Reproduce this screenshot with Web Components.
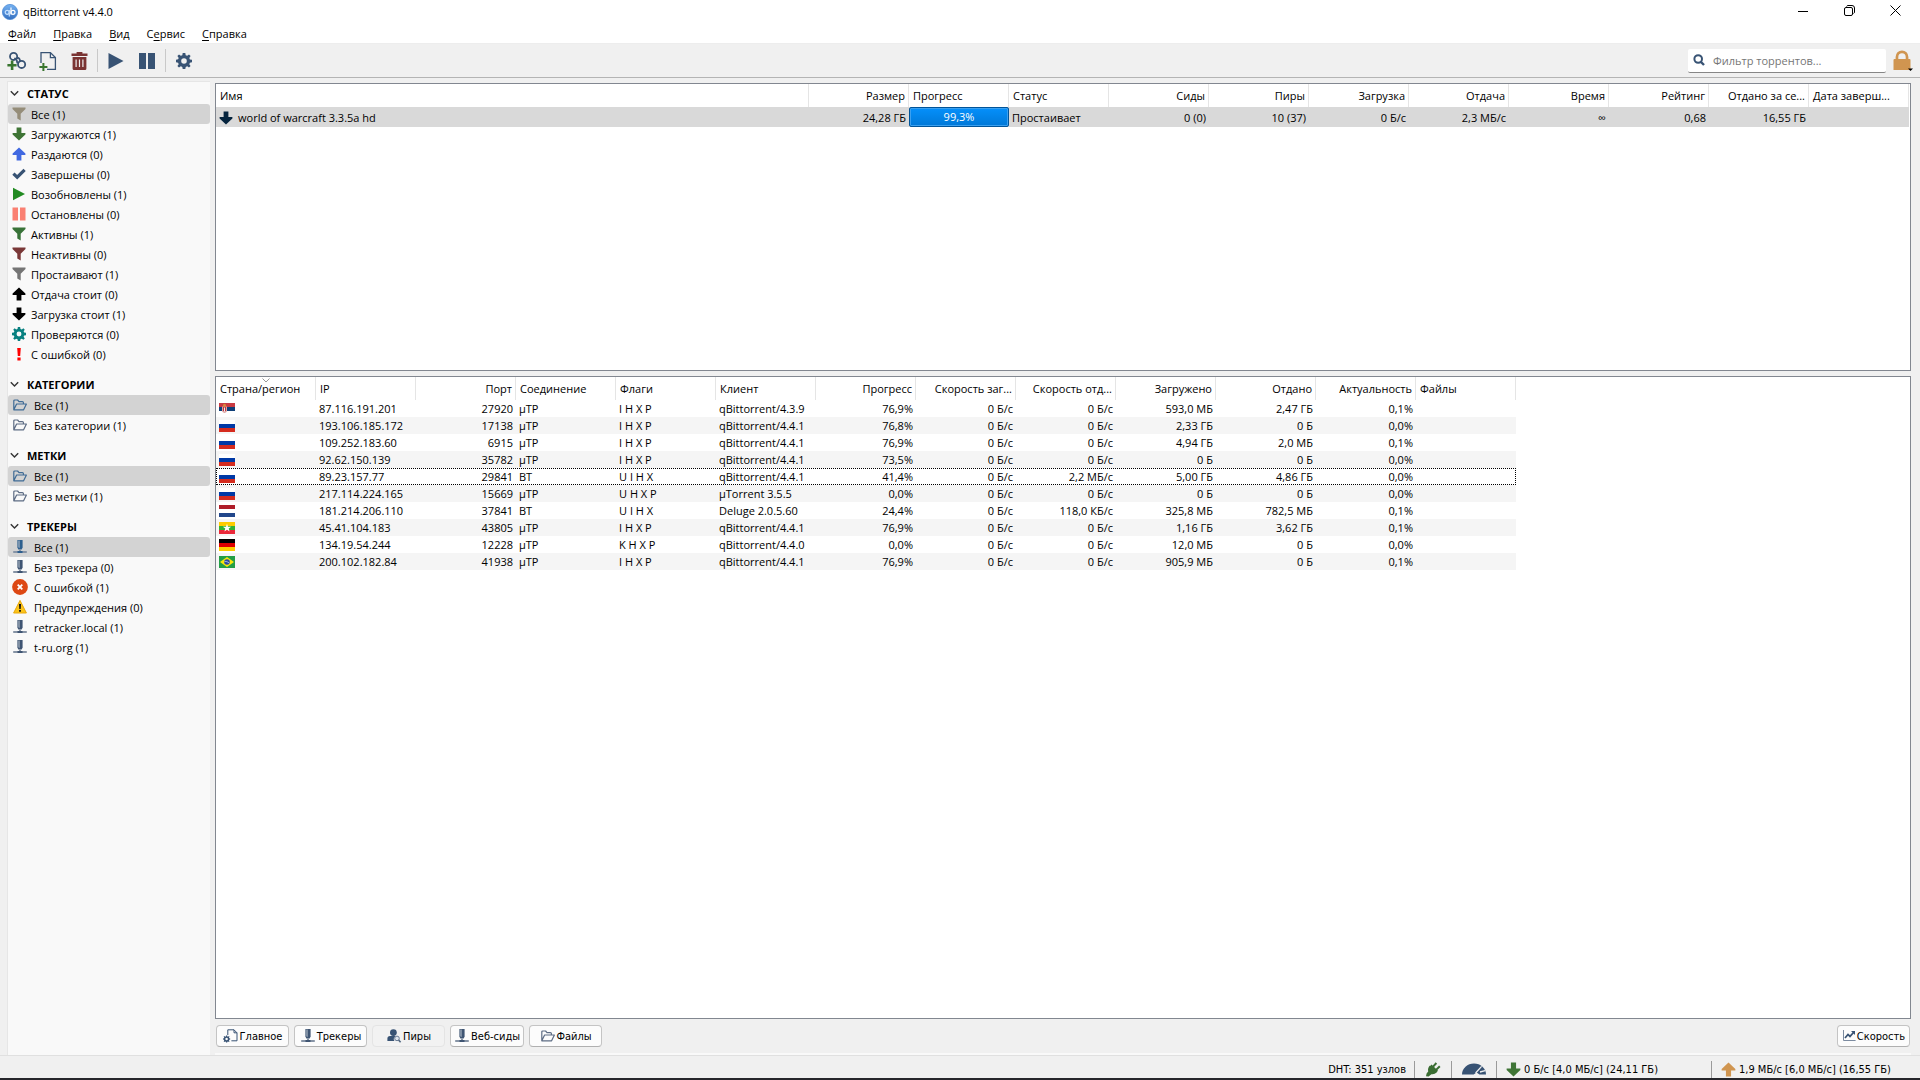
<!DOCTYPE html>
<html lang="ru">
<head>
<meta charset="utf-8">
<title>qBittorrent v4.4.0</title>
<style>
html,body{margin:0;height:100%}
body{font:11px/20px "Open Sans","Noto Sans",sans-serif;color:#000;background:#f0f0f0;overflow:hidden}
qb-window{height:100vh}
</style>
</head>
<body>
<qb-window></qb-window>
<script>
const BLUE = '#385374';
const svg = (w, h, vb, body) => `<svg width="${w}" height="${h}" viewBox="${vb}" aria-hidden="true">${body}</svg>`;
const gearPath = 'M8 5.2A2.8 2.8 0 1 0 8 10.8A2.8 2.8 0 1 0 8 5.2ZM6.7 0H9.3L9.7 2.2L11.2 2.8L13 1.5L14.6 3.1L13.3 4.9L13.9 6.4L16 6.7V9.3L13.9 9.7L13.3 11.2L14.6 13L13 14.6L11.2 13.3L9.7 13.9L9.3 16H6.7L6.3 13.9L4.8 13.3L3 14.6L1.4 13L2.7 11.2L2.1 9.7L0 9.3V6.7L2.1 6.3L2.7 4.9L1.4 3.1L3 1.5L4.8 2.8L6.3 2.2Z';
const gear = (s, c) => svg(s, s, '0 0 16 16', `<path fill-rule="evenodd" fill="${c}" d="${gearPath}"/>`);
const funnel = c => svg(14, 14, '0 0 14 14', `<path fill="${c}" d="M.5.5H13.5V2L8.7 6.8V13.5L5.3 11.5V6.8L.5 2Z"/>`);
const down = (c, s = 14) => svg(s, s, '0 0 14 14', `<path fill="${c}" d="M4.6.5H9.4V6H13.4V7.4L7 13.6L.6 7.4V6H4.6Z"/>`);
const up = (c, s = 14) => svg(s, s, '0 0 14 14', `<path fill="${c}" d="M4.6 13.5H9.4V8H13.4V6.6L7 .4L.6 6.6V8H4.6Z"/>`);
const folder = c => svg(16, 14, '0 0 16 14', `<path fill="none" stroke="${c}" stroke-width="1.2" stroke-linejoin="round" d="M1.8 11.5V3Q1.8 2 2.8 2H5.6L7 3.6H10.4Q11.4 3.6 11.4 4.6V5.6M1.8 11.8L4.6 6H14.4L11.6 11.8Z"/>`);
const tracker = c => svg(16, 16, '0 0 16 16', `<path fill="${c}" d="M5.4 1H10.6V8.6L9.6 10.6H6.4L5.4 8.6Z"/><path fill="#aab6c4" d="M6.4 1.6H7.6V9.2L7 8.4H6.4Z"/><path fill="#8794a6" d="M1.2 12H14.8V14H1.2ZM7 10.6H9V12H7Z"/><path fill="${c}" d="M5.5 12H10.5V14H5.5Z"/>`);
const ICONS = {
  logo: svg(16, 16, '0 0 16 16', '<defs><linearGradient id="g" x2="0" y2="1"><stop stop-color="#76b3f3"/><stop offset="1" stop-color="#346fbf"/></linearGradient></defs><circle cx="8" cy="8" r="7.6" fill="url(#g)" stroke="#4b8ad6" stroke-width=".8"/><g fill="none" stroke="#c4e0ff" stroke-width="1.2"><circle cx="5.2" cy="8.3" r="2"/><path d="M7.3 6V12.6"/></g><g fill="none" stroke="#fff" stroke-width="1.2"><circle cx="11" cy="8.3" r="2"/><path d="M9 3.6V10.5"/></g>'),
  link: svg(20, 20, '0 0 20 20', `<g fill="none" stroke="${BLUE}" stroke-width="1.8"><circle cx="6.6" cy="5.4" r="3.6"/><circle cx="14.6" cy="13.4" r="3.6"/><path d="M7.2 7.4Q8.6 8 10 7.2Q12 6.4 12.6 8.2Q13 9.6 13.4 11M9.6 8.6L10.4 12.4"/></g><path fill="#39752f" d="M3.8 9.6H6.4V13H9.6V15.6H6.4V19H3.8V15.6H.4V13H3.8Z"/>`),
  file: svg(18, 20, '0 0 18 20', `<path fill="none" stroke="${BLUE}" stroke-width="1.3" d="M2 12V1.6H11.4L16.4 6.6V18.4H8M11.4 1.6V6.6H16.4"/><path fill="#39752f" d="M3.4 12H5.4V15H8.4V17H5.4V20H3.4V17H.4V15H3.4Z"/>`),
  trash: svg(17, 20, '0 0 17 20', '<path fill="#7a3332" fill-rule="evenodd" d="M5.6 1H11.4V2.6H16.5V5H.5V2.6H5.6ZM1.6 6H15.4V17.5Q15.4 19 14 19H3Q1.6 19 1.6 17.5ZM4.5 8.5V16H5.7V8.5ZM7.9 8.5V16H9.1V8.5ZM11.3 8.5V16H12.5V8.5Z"/>'),
  start: svg(16, 18, '0 0 16 18', `<path fill="${BLUE}" d="M.5 1L15.5 9L.5 17Z"/>`),
  pause: svg(18, 18, '0 0 18 18', `<path fill="${BLUE}" d="M1 1H8V17H1ZM10 1H17V17H10Z"/>`),
  options: gear(16, BLUE),
  search: svg(12, 12, '0 0 12 12', `<circle cx="5.2" cy="5" r="3.8" fill="none" stroke="${BLUE}" stroke-width="2"/><path d="M8 8L11 11" stroke="${BLUE}" stroke-width="2.4"/>`),
  lock: svg(20, 24, '0 0 20 24', '<path fill="#d09550" fill-rule="evenodd" d="M2.6 10V8A6.4 6.6 0 0 1 15.4 8V10H16.5Q17.5 10 17.5 11V21H.5V11Q.5 10 1.5 10ZM5.3 10H12.7V8A3.7 3.8 0 0 0 5.3 8Z"/><path d="M15 19.4H20L17.5 22Z"/>'),
  all: funnel('#958d79'), active: funnel('#397339'), inactive: funnel('#7a3838'), stalled: funnel('#757575'),
  down: down('#3f7536'), up: up('#4169e1'), upBlack: up('#000'), downBlack: down('#000'), downNavy: down('#05243e', 14),
  done: svg(14, 14, '0 0 14 14', `<path fill="none" stroke="${BLUE}" stroke-width="3.2" d="M1.4 6.6L5.2 10.2L12.6 2.8"/>`),
  resume: svg(14, 14, '0 0 14 14', '<path fill="#228b22" d="M1 .8L13 7L1 13.2Z"/>'),
  stop: svg(14, 14, '0 0 14 14', '<path fill="#fa8072" d="M.5.5H6V13.5H.5ZM8 .5H13.5V13.5H8Z"/>'),
  check: gear(14, '#088080'),
  err: svg(14, 14, '0 0 14 14', '<path fill="#f00" d="M5.2 1H8.8L8.2 9H5.8ZM5.4 10.6H8.6V13.4H5.4Z"/>'),
  folderSel: folder('#3f6b95'), folder: folder('#5d6c84'), trackerSel: tracker('#2d5f8e'), tracker: tracker('#3f5573'),
  error: svg(16, 16, '0 0 16 16', '<circle cx="8" cy="8" r="7.9" fill="#dd4814"/><path d="M5.7 5.7L10.3 10.3M10.3 5.7L5.7 10.3" stroke="#fff" stroke-width="1.8"/>'),
  warn: svg(16, 16, '0 0 16 16', '<path fill="#fcc419" stroke="#e8a80c" stroke-linejoin="round" d="M8 1.4L14.4 14H1.6Z"/><path fill="#111" d="M7 5H9L8.7 10H7.3ZM7.1 11H8.9V12.7H7.1Z"/>'),
  general: svg(16, 16, '0 0 16 16', `<path fill="none" stroke="${BLUE}" d="M4.8 7V1.8H11L14 4.8V12.8H8.4M11 1.8V4.8H14"/><g transform="translate(0,7.4) scale(.45)"><path fill="${BLUE}" fill-rule="evenodd" d="${gearPath}"/></g>`),
  peers: svg(16, 16, '0 0 16 16', `<g fill="${BLUE}"><circle cx="7.4" cy="4.6" r="3.4"/><path d="M1.4 13V10.6Q1.4 8 4 8H9.4L7.6 11L8.4 13Z"/></g><circle cx="11" cy="10.4" r="2.3" fill="#dfe6ee" stroke="#6b7c94"/><path d="M12.6 12L14.6 14.2" stroke="#4f6580" stroke-width="1.6"/>`),
  chart: svg(14, 14, '0 0 14 14', `<path fill="none" stroke="#7c8ba0" d="M1.5 1V11.5H13.6"/><path fill="none" stroke="${BLUE}" stroke-width="1.7" d="M3 9L6 5.4L8 7.4L12 3"/><path fill="${BLUE}" d="M9 2H13V6Z"/>`),
  plug: svg(16, 16, '0 0 16 16', '<g fill="#3a6d33"><path d="M5 4.6L11.8 11Q9.4 13.8 6.4 13.2L3.6 15.6L1 15.2L1.6 12.4L3.2 10.4Q2.4 7 5 4.6Z"/></g><path stroke="#3a6d33" stroke-width="2" d="M7.4 6.4L11.4 2M10.6 9.4L14.8 5.2"/><path fill="#3a6d33" d="M6.5 3.6L13 9.8L10.6 12.2L4.4 6Z"/>'),
  gauge: svg(24, 14, '0 0 24 14', `<path fill="${BLUE}" d="M0 12.4A12 10.8 0 0 1 24 12.4L22 12.6H17.4L14.6 10.6L11.6 12.6H1Z"/><path d="M13.6 11L19.6 4.4M18 10L23.2 8.6" stroke="#f0f0f0" stroke-width="1.3"/>`),
  statusDown: down('#3f7536', 15), statusUp: up('#d09550', 15)
};
const FLAGS = {
  rs: '<path fill="#c93a42" d="M0 0H16V4H0Z"/><path fill="#0f3f78" d="M0 4H16V8H0Z"/><path fill="#fff" d="M0 8H16V12H0Z"/><path fill="#dca0a0" d="M3 3.5H8V8Q7.5 9.5 5.5 10Q3.5 9.5 3 8Z"/><path fill="#b93540" d="M4 4H7V8H4Z"/><path fill="#eee" d="M5 4.5H6V8.5H5Z"/><circle cx="5.5" cy="2.3" r="1.5" fill="#d88a3a"/>',
  ru: '<path fill="#fff" d="M0 0H16V4H0Z"/><path fill="#0039a6" d="M0 4H16V8H0Z"/><path fill="#d52b1e" d="M0 8H16V12H0Z"/>',
  nl: '<path fill="#ae1c28" d="M0 0H16V4H0Z"/><path fill="#fff" d="M0 4H16V8H0Z"/><path fill="#21468b" d="M0 8H16V12H0Z"/>',
  mm: '<path fill="#fecb00" d="M0 0H16V4H0Z"/><path fill="#34b233" d="M0 4H16V8H0Z"/><path fill="#ea2839" d="M0 8H16V12H0Z"/><path fill="#fff" d="M8 1.8L9 4.7H12.2L9.7 6.5L10.6 9.5L8 7.7L5.4 9.5L6.3 6.5L3.8 4.7H7Z"/>',
  de: '<path d="M0 0H16V4H0Z"/><path fill="#d00" d="M0 4H16V8H0Z"/><path fill="#ffce00" d="M0 8H16V12H0Z"/>',
  br: '<path fill="#229e45" d="M0 0H16V12H0Z"/><path fill="#f8e509" d="M8 1L15 6L8 11L1 6Z"/><circle cx="8" cy="6" r="2.8" fill="#2b49a3"/><path d="M5.5 5.4Q8 5 10.3 7" fill="none" stroke="#cfd8ee" stroke-width=".7"/>'
};
const define = (name, build) => customElements.define(name, class extends HTMLElement {
  connectedCallback() {
    if (!this.shadowRoot) this.attachShadow({ mode: 'open' }).innerHTML = '<style>*{box-sizing:border-box}button{font:inherit;color:inherit;background:none;border:0;padding:0;margin:0}svg{display:block}</style>' + build(this);
  }
});

define('qb-icon', el => `<style>:host{display:flex;align-items:center;justify-content:center;flex:none}</style>${ICONS[el.getAttribute('name')]}`);

define('qb-titlebar', () => `<style>
:host{display:flex;align-items:center;height:23px;padding:0 17px 0 2px;gap:5px;background:#fff}
h1{font:inherit;margin:0;flex:1}
nav{display:flex;gap:30px;padding-bottom:2px}
button{width:16px;height:16px;display:grid;place-items:center}
</style><qb-icon name="logo"></qb-icon><h1>qBittorrent v4.4.0</h1>
<nav><button aria-label="Свернуть">${svg(10, 10, '0 0 10 10', '<path d="M0 5.5H10" stroke="#000"/>')}</button>
<button aria-label="Восстановить">${svg(11, 11, '0 0 11 11', '<rect x=".5" y="2.5" width="8" height="8" rx="1.5" fill="none" stroke="#000"/><path d="M2.5 1.5Q3 .5 4 .5H8Q10.5 .5 10.5 3V7Q10.5 8 9.5 8.5" fill="none" stroke="#000"/>')}</button>
<button aria-label="Закрыть">${svg(11, 11, '0 0 11 11', '<path d="M.5.5L10.5 10.5M10.5.5L.5 10.5" stroke="#000"/>')}</button></nav>`);

define('qb-menubar', () => `<style>
:host{display:flex;height:21px;padding:1px 0 0 8px;gap:17px;background:#fff;border-bottom:1px solid #ededed;box-sizing:border-box}
button{line-height:20px}u{text-underline-offset:2px}
</style>${['<u>Ф</u>айл', '<u>П</u>равка', '<u>В</u>ид', 'С<u>е</u>рвис', '<u>С</u>правка'].map(t => `<button>${t}</button>`).join('')}`);

define('qb-toolbar', () => `<style>
:host{display:flex;align-items:center;height:34px;padding:0 7px;border-bottom:1px solid #b4b4b4;background:#f0f0f0;box-sizing:border-box}
button{width:20px;height:24px;display:grid;place-items:center}
.set{display:flex;gap:11px;align-items:center}
i{width:1px;height:23px;background:#c9c9c9;margin:0 8px}
label{margin-left:auto;display:flex;align-items:center;gap:8px;width:198px;height:24px;padding:0 5px;background:#fff;border-bottom:1px solid #868686;border-radius:2px;margin-right:7px}
input{border:0;outline:0;background:none;font:inherit;width:100%;padding:2px 0 0}
input::placeholder{color:#767676;opacity:1}
</style>
<div class="set"><button aria-label="Добавить ссылку"><qb-icon name="link"></qb-icon></button><button aria-label="Добавить файл"><qb-icon name="file"></qb-icon></button><button aria-label="Удалить"><qb-icon name="trash"></qb-icon></button></div><i></i>
<div class="set"><button aria-label="Возобновить"><qb-icon name="start"></qb-icon></button><button aria-label="Остановить"><qb-icon name="pause"></qb-icon></button></div><i></i>
<button aria-label="Настройки"><qb-icon name="options"></qb-icon></button>
<label><qb-icon name="search"></qb-icon><input type="text" aria-label="Фильтр торрентов" placeholder="Фильтр торрентов..."></label>
<button aria-label="Блокировка"><qb-icon name="lock"></qb-icon></button>`);

define('qb-group', el => `<style>
:host{display:block;margin-bottom:11px}
h2{margin:0;font:inherit;font-weight:700}
h2 button{display:flex;align-items:center;gap:8px;height:20px;padding-left:2px}
</style><h2><button>${svg(9, 12, '0 0 9 12', '<path d="M.8 3.2L4.5 7L8.2 3.2" fill="none" stroke="#333" stroke-width="1.4"/>')}<span>${el.getAttribute('label')}</span></button></h2><slot></slot>`);

define('qb-filter', el => `<style>
:host{display:block}
button{display:flex;align-items:center;width:100%;height:20px;padding-left:4px;gap:5px;border-radius:3px;text-align:left}
span{padding-top:2px}
qb-icon{width:14px}:host([wide]) qb-icon{width:16px}
:host([wide]) button{gap:6px}
:host([selected]) button{background:#d3d3d3}
</style><button><qb-icon name="${el.getAttribute('icon')}"></qb-icon><span><slot></slot></span></button>`);

const group = (label, rows, wide = '') => `<qb-group label="${label}">${rows.map(([i, t], n) => `<qb-filter icon="${i}" ${wide} ${n ? '' : 'selected'}>${t}</qb-filter>`).join('')}</qb-group>`;
define('qb-sidebar', () => `<style>:host{display:block;background:#f9f9f9;border:solid #e6e6e6;border-width:1px 0 0 1px;padding-top:2px;box-sizing:border-box}</style>`
 + group('СТАТУС', [['all', 'Все (1)'], ['down', 'Загружаются (1)'], ['up', 'Раздаются (0)'], ['done', 'Завершены (0)'], ['resume', 'Возобновлены (1)'], ['stop', 'Остановлены (0)'], ['active', 'Активны (1)'], ['inactive', 'Неактивны (0)'], ['stalled', 'Простаивают (1)'], ['upBlack', 'Отдача стоит (0)'], ['downBlack', 'Загрузка стоит (1)'], ['check', 'Проверяются (0)'], ['err', 'С ошибкой (0)']])
 + group('КАТЕГОРИИ', [['folderSel', 'Все (1)'], ['folder', 'Без категории (1)']], 'wide')
 + group('МЕТКИ', [['folderSel', 'Все (1)'], ['folder', 'Без метки (1)']], 'wide')
 + group('ТРЕКЕРЫ', [['trackerSel', 'Все (1)'], ['tracker', 'Без трекера (0)'], ['error', 'С ошибкой (1)'], ['warn', 'Предупреждения (0)'], ['tracker', 'retracker.local (1)'], ['tracker', 't-ru.org (1)']], 'wide'));

const tableCss = `:host{display:block;background:#fff;border:1px solid #828790;overflow:hidden;box-sizing:border-box}
table{border-collapse:separate;border-spacing:0;table-layout:fixed}
th,td{padding:0 3px;text-align:left;white-space:nowrap;overflow:hidden;font-weight:400}
th{height:23px;line-height:22px;border-right:1px solid #e5e5e5;padding:0 3px 0 4px;text-overflow:ellipsis}
.r{text-align:right}`;
define('qb-transfers', () => `<style>${tableCss}
table{width:calc(100% - 1px)}col{width:100px}col.name{width:auto}
td{height:20px;line-height:18px;padding-top:2px;background:#d9d9d9}
.n{display:flex;align-items:center;gap:5px}
.bar{padding:0}
.bar div{height:20px;line-height:18px;text-align:center;color:#fff;border:1px solid #005499;border-radius:2px;background:linear-gradient(#0590fb,#0078d7);box-shadow:inset 0 0 0 1px #3ba0f0}
</style><table><colgroup><col class="name">${'<col>'.repeat(11)}</colgroup><thead><tr><th>Имя</th><th class="r">Размер</th><th>Прогресс</th><th>Статус</th>${['Сиды', 'Пиры', 'Загрузка', 'Отдача', 'Время', 'Рейтинг', 'Отдано за се...'].map(t => `<th class="r">${t}</th>`).join('')}<th>Дата заверш...</th></tr></thead>
<tbody><tr><td><div class="n"><qb-icon name="downNavy"></qb-icon><span>world of warcraft 3.3.5a hd</span></div></td><td class="r">24,28 ГБ</td><td class="bar"><div>99,3%</div></td><td>Простаивает</td>${['0 (0)', '10 (37)', '0 Б/с', '2,3 МБ/с', '∞', '0,68', '16,55 ГБ'].map(t => `<td class="r">${t}</td>`).join('')}<td></td></tr></tbody></table>`);

const PEERS = `rs|87.116.191.201|27920|μTP|I H X P|qBittorrent/4.3.9|76,9%|0 Б/с|0 Б/с|593,0 МБ|2,47 ГБ|0,1%
ru|193.106.185.172|17138|μTP|I H X P|qBittorrent/4.4.1|76,8%|0 Б/с|0 Б/с|2,33 ГБ|0 Б|0,0%
ru|109.252.183.60|6915|μTP|I H X P|qBittorrent/4.4.1|76,9%|0 Б/с|0 Б/с|4,94 ГБ|2,0 МБ|0,1%
ru|92.62.150.139|35782|μTP|I H X P|qBittorrent/4.4.1|73,5%|0 Б/с|0 Б/с|0 Б|0 Б|0,0%
ru|89.23.157.77|29841|BT|U I H X|qBittorrent/4.4.1|41,4%|0 Б/с|2,2 МБ/с|5,00 ГБ|4,86 ГБ|0,0%
ru|217.114.224.165|15669|μTP|U H X P|μTorrent 3.5.5|0,0%|0 Б/с|0 Б/с|0 Б|0 Б|0,0%
nl|181.214.206.110|37841|BT|U I H X|Deluge 2.0.5.60|24,4%|0 Б/с|118,0 КБ/с|325,8 МБ|782,5 МБ|0,1%
mm|45.41.104.183|43805|μTP|I H X P|qBittorrent/4.4.1|76,9%|0 Б/с|0 Б/с|1,16 ГБ|3,62 ГБ|0,1%
de|134.19.54.244|12228|μTP|K H X P|qBittorrent/4.4.0|0,0%|0 Б/с|0 Б/с|12,0 МБ|0 Б|0,0%
br|200.102.182.84|41938|μTP|I H X P|qBittorrent/4.4.1|76,9%|0 Б/с|0 Б/с|905,9 МБ|0 Б|0,1%`.split('\n').map(r => r.split('|'));
const right = n => n === 2 || n > 5 && n < 12;
define('qb-peers', () => `<style>${tableCss}
table{width:1300px}
td{height:17px;line-height:17px}
tr:nth-child(even) td{background:#f5f5f5}
tr.cur{outline:1px dotted #000;outline-offset:-1px}
th:first-child{position:relative}
th svg{position:absolute;left:46px;top:1px}
</style><table><thead><tr>${['Страна/регион', 'IP', 'Порт', 'Соединение', 'Флаги', 'Клиент', 'Прогресс', 'Скорость заг...', 'Скорость отд...', 'Загружено', 'Отдано', 'Актуальность', 'Файлы'].map((t, n) => `<th${right(n) ? ' class="r"' : ''}>${t}${n ? '' : svg(8, 5, '0 0 8 5', '<path d="M.5.5L4 4L7.5.5" fill="none" stroke="#999"/>')}</th>`).join('')}</tr></thead><tbody>
${PEERS.map((r, i) => `<tr${i === 4 ? ' class="cur"' : ''}>${r.map((c, n) => `<td${right(n) ? ' class="r"' : ''}>${n ? c : svg(16, 12, '0 0 16 12', FLAGS[c])}</td>`).join('')}<td></td></tr>`).join('')}</tbody></table>`);

define('qb-tab', el => `<style>
:host{display:block}
button{display:flex;align-items:center;justify-content:center;gap:1px;min-width:73px;height:22px;padding:0 3px;border:1px solid #c4c4c4;border-bottom-color:#b0b0b0;border-radius:4px;background:#fcfcfc;line-height:18px;white-space:nowrap}
span{padding-top:2px}
:host([active]) button{background:#f2f2f2;border-color:#e4e4e4}
</style><button><qb-icon name="${el.getAttribute('icon')}"></qb-icon><span><slot></slot></span></button>`);
define('qb-tabs', () => `<style>:host{display:flex;gap:5px;padding:6px 1px;border-bottom:2px solid #f9f9f9;font-family:"DejaVu Sans Condensed","Open Sans",sans-serif;font-size:11px}qb-tab:last-child{margin-left:auto}</style>
<qb-tab icon="general">Главное</qb-tab><qb-tab icon="tracker">Трекеры</qb-tab><qb-tab icon="peers" active>Пиры</qb-tab><qb-tab icon="tracker">Веб-сиды</qb-tab><qb-tab icon="folder">Файлы</qb-tab><qb-tab icon="chart">Скорость</qb-tab>`);

define('qb-status', () => `<style>
:host{display:flex;justify-content:flex-end;align-items:center;height:25px;padding-top:4px;border-top:1px solid #e0e0e0;border-bottom:2px solid #26262b;font-family:"DejaVu Sans Condensed","Open Sans",sans-serif;font-size:11px;box-sizing:border-box}
div{display:flex;align-items:center;height:17px;gap:3px;line-height:17px;white-space:nowrap}
div+div{border-left:1px solid #9a9a9a}
.dht{padding-right:8px}.p{width:37px;justify-content:center}.g{width:45px;justify-content:center}.d{width:215px;padding-left:9px}.u{width:209px;padding-left:9px}
</style><div class="dht">DHT: 351 узлов</div><div class="p"><qb-icon name="plug"></qb-icon></div><div class="g"><qb-icon name="gauge"></qb-icon></div><div class="d"><qb-icon name="statusDown"></qb-icon><span>0 Б/с [4,0 МБ/с] (24,11 ГБ)</span></div><div class="u"><qb-icon name="statusUp"></qb-icon><span>1,9 МБ/с [6,0 МБ/с] (16,55 ГБ)</span></div>`);

define('qb-window', () => `<style>
:host{display:flex;flex-direction:column;background:#f0f0f0}
main{flex:1;min-height:0;display:flex;padding:3px 9px 0 7px}
qb-sidebar{width:203px}
section{flex:1;min-width:0;display:flex;flex-direction:column;margin-left:5px;padding-top:2px}
qb-transfers{flex:1 1 288px}qb-peers{flex:2 2 643px;margin-top:5px}
</style><qb-titlebar></qb-titlebar><qb-menubar></qb-menubar><qb-toolbar></qb-toolbar><main><qb-sidebar></qb-sidebar><section><qb-transfers></qb-transfers><qb-peers></qb-peers><qb-tabs></qb-tabs></section></main><qb-status></qb-status>`);
</script>
</body>
</html>
